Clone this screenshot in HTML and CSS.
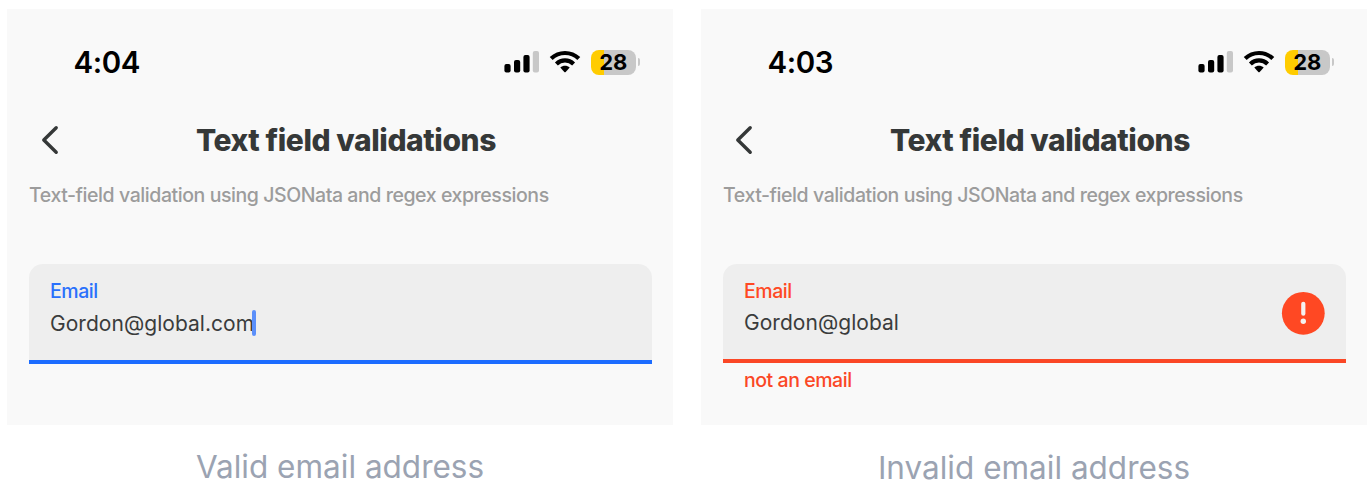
FILE: index.html
```html
<!DOCTYPE html>
<html lang="en">
<head>
<meta charset="utf-8">
<title>Text field validations</title>
<link rel="stylesheet" href="styles.css">
</head>
<body>
<svg class="defs" width="0" height="0" aria-hidden="true">
  <symbol id="signal" viewBox="0 0 36 24">
    <rect x="0.4" y="14" width="6.2" height="8.6" rx="2"/>
    <rect x="10" y="10" width="6.2" height="12.6" rx="2"/>
    <rect x="19.4" y="5.1" width="6.2" height="17.5" rx="2"/>
    <rect x="28.8" y="0.9" width="6.2" height="21.7" rx="2" fill="#c8c8c8"/>
  </symbol>
  <symbol id="wifi" viewBox="0 0 32 24">
    <g fill="none" stroke="#000" stroke-width="4.2">
      <path d="M2.2 8.6C10 1.1 22 1.1 29.8 8.6"/>
      <path d="M7.4 13.9C12.2 9.3 19.8 9.3 24.6 13.9"/>
    </g>
    <path d="M11.3 17.6C13.9 15.1 18.1 15.1 20.7 17.6L16.7 21.9Q16 22.6 15.3 21.9Z"/>
  </symbol>
  <symbol id="back" viewBox="0 0 20 32">
    <path d="M16.2 3.8L3.8 16L16.2 28.2" fill="none" stroke="#353838" stroke-width="3.4" stroke-linecap="round" stroke-linejoin="round"/>
  </symbol>
</svg>
<main class="gallery">
  <figure class="example valid">
    <section class="screen">
      <div class="status">
        <span class="time">4:04</span>
        <svg class="signal"><use href="#signal"/></svg>
        <svg class="wifi"><use href="#wifi"/></svg>
        <span class="battery"><span class="level">28</span><i class="cap"></i></span>
      </div>
      <header class="nav">
        <svg class="back"><use href="#back"/></svg>
        <h1 class="title">Text field validations</h1>
      </header>
      <p class="subtitle">Text-field validation using JSONata and regex expressions</p>
      <div class="field">
        <div class="content">
          <span class="label">Email</span>
          <span class="value"><span class="typed">Gordon@global.com</span><i class="caret"></i></span>
        </div>
      </div>
    </section>
    <figcaption class="caption">Valid email address</figcaption>
  </figure>
  <figure class="example invalid">
    <section class="screen">
      <div class="status">
        <span class="time">4:03</span>
        <svg class="signal"><use href="#signal"/></svg>
        <svg class="wifi"><use href="#wifi"/></svg>
        <span class="battery"><span class="level">28</span><i class="cap"></i></span>
      </div>
      <header class="nav">
        <svg class="back"><use href="#back"/></svg>
        <h1 class="title">Text field validations</h1>
      </header>
      <p class="subtitle">Text-field validation using JSONata and regex expressions</p>
      <div class="field">
        <div class="content">
          <span class="label">Email</span>
          <span class="value"><span class="typed">Gordon@global</span></span>
        </div>
        <svg class="alert" viewBox="0 0 44 44">
          <circle cx="22.3" cy="22.3" r="21.4" fill="#ff4823"/>
          <path d="M22.3 12.8V22.7" stroke="#f5f1f0" stroke-width="4.2" stroke-linecap="round"/>
          <circle cx="22.3" cy="30.3" r="2.7" fill="#f5f1f0"/>
        </svg>
      </div>
      <p class="error">not an email</p>
    </section>
    <figcaption class="caption">Invalid email address</figcaption>
  </figure>
</main>
</body>
</html>
```
FILE: styles.css
```css
* { box-sizing: border-box; }
body {
  margin: 0;
  background: #fff;
  font-family: Inter, "Liberation Sans", sans-serif;
  overflow: hidden;
}
.defs { display: none; }
.gallery { display: flex; gap: 28px; padding: 9px 0 0 7px; }
.example { width: 666px; margin: 0; flex: none; }
.screen { height: 416px; background: #f9f9f9; padding: 34px 21px 0 22px; }
.status { display: flex; align-items: center; height: 38px; padding: 0 12.5px 0 44.5px; }
.time {
  flex: 1;
  font-size: 29.5px;
  font-weight: 600;
  line-height: 38px;
  letter-spacing: -0.4px;
  color: #000;
}
.signal { width: 36px; height: 24px; margin-right: 9px; }
.wifi { width: 32px; height: 24px; margin-right: 10px; }
.battery { display: flex; align-items: center; gap: 2px; }
.level {
  width: 44.5px;
  height: 25px;
  border-radius: 8px;
  background: linear-gradient(90deg, #ffcc00 13px, #c8c8c8 13px);
  font-size: 22px;
  font-weight: 700;
  line-height: 25px;
  text-align: center;
}
.cap { width: 2px; height: 8px; border-radius: 0 3px 3px 0; background: #c8c8c8; }
.nav { display: flex; align-items: center; height: 40px; margin-top: 39px; padding: 0 0 0 11px; }
.back { width: 20px; height: 32px; margin-right: -20px; }
.title {
  flex: 1;
  margin: 0;
  font-size: 30px;
  font-weight: 800;
  line-height: 40px;
  letter-spacing: -0.42px;
  text-align: center;
  color: #353838;
}
.subtitle {
  margin: 21px 0 0;
  font-size: 19.5px;
  font-weight: 500;
  line-height: 28px;
  letter-spacing: -0.43px;
  color: #9c9c9c;
  white-space: nowrap;
}
.field {
  display: flex;
  align-items: center;
  height: 100px;
  margin-top: 55px;
  padding: 0 21px;
  border-bottom: 4px solid #1c6cff;
  border-radius: 14px 14px 0 0;
  background: #eee;
}
.content { display: flex; flex: 1; flex-direction: column; height: 70px; }
.label { font-size: 19.5px; font-weight: 500; line-height: 28px; letter-spacing: -0.45px; color: #2a70fc; }
.value { display: flex; align-items: center; height: 36px; font-size: 21px; letter-spacing: 0.04px; color: #3a3c3c; }
.typed { margin-right: -2px; }
.caret { width: 4px; height: 26px; border-radius: 2px; background: #5b8ffa; }
.alert { width: 44px; height: 44px; margin-top: 2px; }
.invalid .field { height: 99px; margin-bottom: 2px; border-bottom-color: #fb4726; }
.invalid .label { color: #ff4823; }
.error {
  margin: 0;
  padding-left: 21px;
  font-size: 19.5px;
  font-weight: 500;
  line-height: 30px;
  letter-spacing: -0.45px;
  color: #fb4726;
}
.caption {
  margin-top: 22px;
  font-size: 31.5px;
  line-height: 40px;
  text-align: center;
  color: #9ba3b2;
}
.invalid .caption { margin-top: 23px; }
```
